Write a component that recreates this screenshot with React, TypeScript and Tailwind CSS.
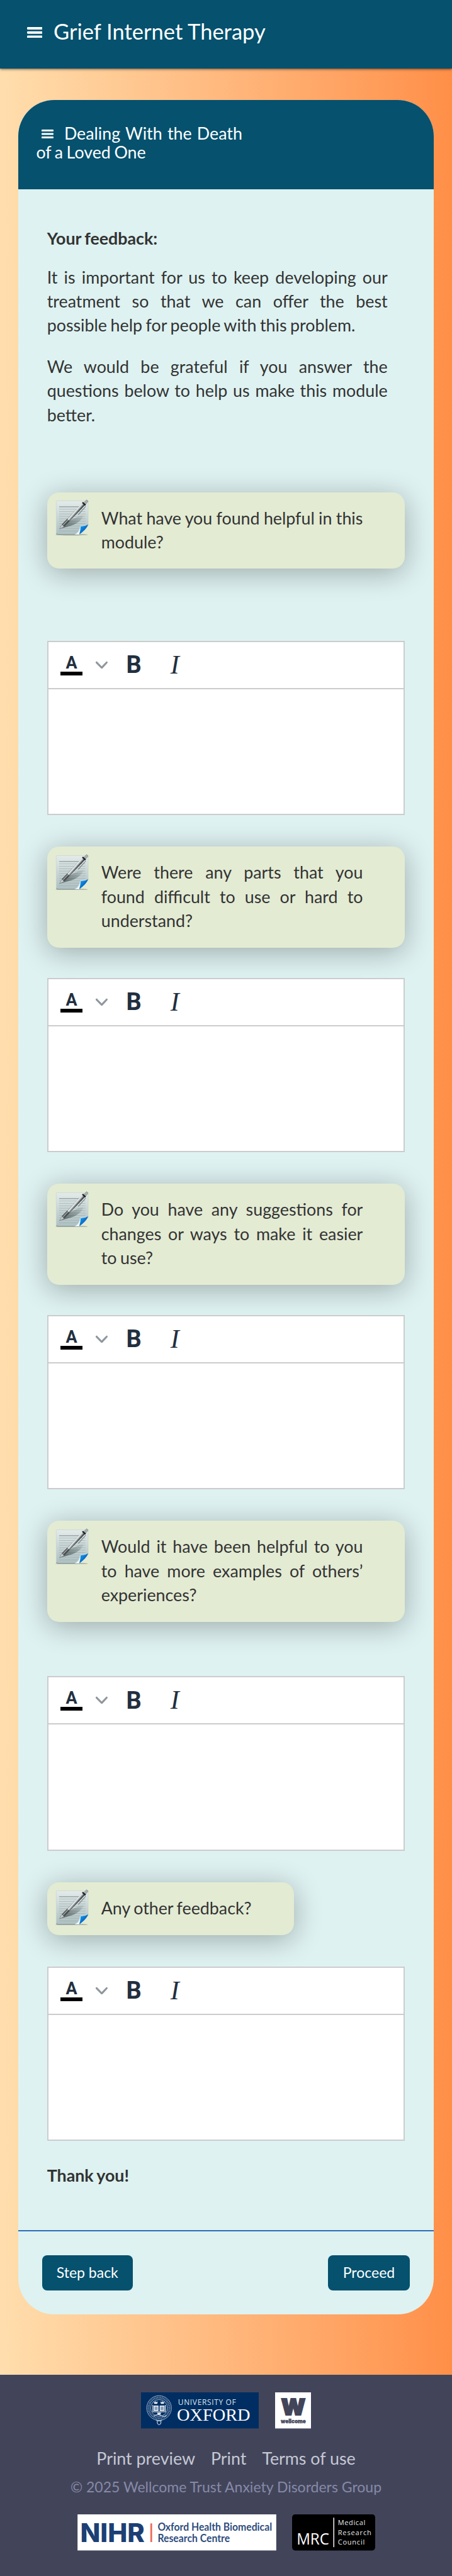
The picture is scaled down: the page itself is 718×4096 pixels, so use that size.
const questions = [
  {
    text: 'What have you found helpful in this module?',
    card: 'mt-[104px] h-[121px]',
    editor: 'mt-[115px]',
  },
  {
    text: 'Were there any parts that you found difficult to use or hard to understand?',
    card: 'mt-[49.8px] h-[160.8px]',
    editor: 'mt-[47.8px]',
  },
  {
    text: 'Do you have any suggestions for changes or ways to make it easier to\u00a0use?',
    card: 'mt-[49.8px] h-[160.8px]',
    editor: 'mt-[47.8px]',
  },
  {
    text: 'Would it have been helpful to you to have more examples of others’ experiences?',
    card: 'mt-[49.8px] h-[160.8px]',
    editor: 'mt-[86.1px]',
  },
  {
    text: 'Any other feedback?',
    card: 'mt-[49.8px] h-[84.2px] w-[392.5px]',
    editor: 'mt-[50px]',
  },
];

const links = ['Print preview', 'Print', 'Terms of use'];

function Burger({ className }: { className: string }) {
  return (
    <svg viewBox="0 0 24 18" preserveAspectRatio="none" fill="currentColor" className={className}>
      <rect width="24" height="4" rx="1.2" />
      <rect y="7" width="24" height="4" rx="1.2" />
      <rect y="14" width="24" height="4" rx="1.2" />
    </svg>
  );
}

function NotepadIcon() {
  return (
    <svg viewBox="0 0 60 60" className="h-[57.4px] w-[57.4px] shrink-0">
      <defs>
        <linearGradient id="paper" x1="0" y1="0" x2="0" y2="1">
          <stop offset="0" stopColor="#e3ebea" />
          <stop offset="1" stopColor="#adc0c2" />
        </linearGradient>
        <linearGradient id="fold" x1="0" y1="0" x2="1" y2="1">
          <stop offset="0" stopColor="#12b4f5" />
          <stop offset="0.6" stopColor="#0a62c4" />
        </linearGradient>
        <linearGradient id="barrel" gradientUnits="userSpaceOnUse" x1="29.5" y1="23" x2="34" y2="27">
          <stop offset="0" stopColor="#5d6465" />
          <stop offset="0.35" stopColor="#f4f7f7" />
          <stop offset="0.65" stopColor="#a9b0b0" />
          <stop offset="1" stopColor="#3f4546" />
        </linearGradient>
        <linearGradient id="penShadow" x1="0" y1="1" x2="1" y2="0">
          <stop offset="0" stopColor="#3c4648" stopOpacity="0.8" />
          <stop offset="1" stopColor="#3c4648" stopOpacity="0.05" />
        </linearGradient>
      </defs>
      <ellipse cx="29" cy="58.8" rx="27" ry="1.3" fill="#6c7568" opacity="0.45" />
      <path d="M4.5 2.5h51a1 1 0 0 1 1 1V43L42 58.5H5.5a2 2 0 0 1-2-2v-53a1 1 0 0 1 1-1z" fill="url(#paper)" stroke="#c3cecd" strokeWidth="0.6" />
      <path d="M4 56.5q0 2 2 2h36" fill="none" stroke="#6f7b7b" strokeWidth="0.8" />
      <path d="M8.3 12.4H46" stroke="#6e7879" strokeWidth="0.9" />
      <path
        d="M8.3 16.3H52M8.3 20.3H52M8.3 24.3H52M8.3 28.3H52M8.3 32.3H52M8.3 36.3H52M8.3 40.3H52M8.3 44.3H44M8.3 48.3H42M8.3 52.6H40"
        stroke="#9fabab"
        strokeWidth="0.7"
      />
      <path d="M9.5 49L24 36 44 27Q51 25 47 31 40 40 28 44z" fill="url(#penShadow)" />
      <path d="M34 58.5Q41.5 56 43.5 44.5l13-2L42 58.5z" fill="#eef4f5" />
      <path d="M44 45q7 0 12.7-3.2-3 8-15 16.7Q44 51 44 45z" fill="url(#fold)" />
      <path d="M12.8 41.8L47.5 5.2l4.3 4L16.5 45.6z" fill="url(#barrel)" />
      <path d="M12.8 41.8l9-9.5 3.7 3.8-9 9.5z" fill="#2c3132" opacity="0.7" />
      <path d="M15 42.5l8.5-8.9" stroke="#d9dede" strokeWidth="0.9" />
      <path d="M9 49.3l3.8-7.5 3.7 3.8z" fill="#c9cfcf" stroke="#5b6162" strokeWidth="0.5" />
      <path d="M52.5 11.5L40 25.5" stroke="#747b7c" strokeWidth="1.1" />
      <path d="M48 4.2l5 4.5-1.6 2-5.2-4.7z" fill="#1e2223" />
      <path d="M50 4.6L54 .8l2.6 2.3-3.6 4.4z" fill="#aab1b1" stroke="#6a7071" strokeWidth="0.6" />
    </svg>
  );
}

function Editor({ className }: { className: string }) {
  return (
    <div className={`relative h-[277.6px] w-[568.7px] border-2 border-[#ccc] bg-white text-[#222f3e] ${className}`}>
      <div className="flex h-[75px] items-start border-b-2 border-[#ccc] pt-[13px] pl-[14px]">
        <div className="flex h-[46px] w-[46px] flex-col items-center justify-end pb-[6px]">
          <span className="font-['Roboto',sans-serif] text-[27px] leading-[24px] font-bold">A</span>
          <span className="mt-[2px] h-[6px] w-[34.5px] bg-black" />
        </div>
        <svg viewBox="0 0 10 10" className="mt-[14px] ml-[15px] h-[19px] w-[19px] fill-[#222f3e] opacity-50">
          <path d="M8.7 2.2c.3-.3.8-.3 1 0 .4.4.4.9 0 1.2L5.7 7.8c-.3.3-.9.3-1.2 0L.2 3.4a.8.8 0 0 1 0-1.2c.3-.3.8-.3 1.1 0L5 6l3.7-3.8z" />
        </svg>
        <span className="ml-[19px] flex h-[46px] w-[46px] items-center justify-center pt-px font-['Roboto',sans-serif] text-[38px] leading-none font-bold">
          B
        </span>
        <span className="ml-[19px] flex h-[46px] w-[46px] items-center justify-center font-['Liberation_Serif',serif] text-[42px] leading-none italic">
          I
        </span>
      </div>
    </div>
  );
}

function OxfordLogo() {
  return (
    <svg viewBox="0 0 195.5 60" className="h-[57.4px] w-[187px]">
      <rect width="195.5" height="60" fill="#002e62" />
      <g fill="none" stroke="#b9c6d8">
        <circle cx="30" cy="26" r="20.5" strokeWidth="0.9" />
        <circle cx="30" cy="26" r="17.2" strokeWidth="3.6" strokeDasharray="1.2 1.3" opacity="0.7" />
        <circle cx="30" cy="26" r="14" strokeWidth="0.9" />
        <path d="M21 40q5-5 12-1.5T42 38M25 46q5 3 10 0M27 47v4q3 6 6 0v-4" strokeWidth="1.3" />
      </g>
      <g fill="#e8edf3">
        <path d="M21 22h8v9h-8zM31 22h8v9h-8z" />
        <path d="M22 19l-.8-4 2.2 1.6L24.5 14l1.1 2.6 2.2-1.6L27 19zM33 19l-.8-4 2.2 1.6 1.1-2.6 1.1 2.6 2.2-1.6L38 19zM27.5 37l-.8-4 2.2 1.6L30 32l1.1 2.6 2.2-1.6-.8 4z" />
        <path d="M19 21h1.2v12H19zM39.8 21H41v12h-1.2zM19 32h22v1H19z" />
      </g>
      <path d="M22.5 24.5h5M22.5 26.5h5M22.5 28.5h5M32.5 24.5h5M32.5 26.5h5M32.5 28.5h5" stroke="#002e62" strokeWidth="0.8" />
      <text x="61.5" y="20.5" textLength="96" fill="#dfe6ee" fontFamily="Open Sans, sans-serif" fontSize="12.5">
        UNIVERSITY OF
      </text>
      <text x="59.5" y="47" textLength="122" lengthAdjust="spacingAndGlyphs" fill="#fff" fontFamily="Liberation Serif, serif" fontSize="29">
        OXFORD
      </text>
    </svg>
  );
}

function WellcomeLogo() {
  return (
    <svg viewBox="0 0 60 60" className="h-[57.4px] w-[57.4px]">
      <rect width="60" height="60" fill="#fff" />
      <g fill="#42455a" stroke="#42455a" fontFamily="Inter, sans-serif" fontWeight="900">
        <text x="10" y="38" textLength="40.5" lengthAdjust="spacingAndGlyphs" fontSize="37" strokeWidth="2">
          W
        </text>
        <text x="9.5" y="51.5" textLength="41.5" lengthAdjust="spacingAndGlyphs" fontSize="9" strokeWidth="0.3">
          wellcome
        </text>
      </g>
    </svg>
  );
}

function NihrLogo() {
  return (
    <svg viewBox="0 0 330 60" className="h-[57.4px] w-[316px] overflow-visible">
      <rect width="330" height="60" fill="#fff" />
      <rect x="121" y="15" width="2.8" height="31" fill="#f0624f" />
      <g fill="#1c3f74">
        <text x="4.5" y="46" textLength="107" lengthAdjust="spacingAndGlyphs" fontFamily="Inter, sans-serif" fontSize="42.5" fontWeight="800">
          NIHR
        </text>
        <g fontFamily="Lato, sans-serif" fontSize="17.8" fontWeight="700" opacity="0.93">
          <text x="133" y="27.7" textLength="190" lengthAdjust="spacingAndGlyphs">
            Oxford Health Biomedical
          </text>
          <text x="133" y="46" textLength="120" lengthAdjust="spacingAndGlyphs">
            Research Centre
          </text>
        </g>
      </g>
    </svg>
  );
}

function MrcLogo() {
  return (
    <svg viewBox="0 0 138 60" className="h-[57.4px] w-[132px]">
      <rect width="138" height="60" rx="5" fill="#000" />
      <rect x="68.5" y="5.5" width="1.5" height="49" fill="#fff" />
      <g fill="#fff">
        <text x="7.5" y="50.7" textLength="54" lengthAdjust="spacingAndGlyphs" fontFamily="Open Sans, sans-serif" fontSize="26">
          MRC
        </text>
        <g fontFamily="Open Sans, sans-serif" fontSize="11.5" opacity="0.92">
          <text x="76" y="18" textLength="45.5">Medical</text>
          <text x="76" y="34" textLength="55.5">Research</text>
          <text x="76" y="49.8" textLength="44.5">Council</text>
        </g>
      </g>
    </svg>
  );
}

export default function App() {
  return (
    <div className="flex h-[4096px] w-[718px] flex-col overflow-hidden bg-linear-to-r from-[#ffdead] to-[#ff8f47] font-['Lato',sans-serif] text-[#333]">
      <header className="relative flex h-[109px] shrink-0 items-start bg-[#05516e] pt-[29px] pl-[42.5px] text-white shadow-[0_1px_4px_rgba(0,0,0,0.6)]">
        <Burger className="mt-[13.5px] h-[17.5px] w-[24.5px]" />
        <h1 className="ml-[18px] text-[34.5px] leading-[41px]">Grief Internet Therapy</h1>
      </header>

      <main className="mx-[28.7px] mt-[50px] h-[3521px] shrink-0 overflow-hidden rounded-[57.4px] bg-[#def2f1]">
        <div className="h-[141.7px] bg-[#05516e] pt-[38px] pl-[28.7px] text-white">
          <h2 className="w-[327.5px] text-justify text-[26.8px] leading-[30.3px] [word-spacing:-1.3px]">
            <Burger className="mr-[16.5px] mb-[5px] ml-[9px] inline-block h-[14px] w-[19px]" />
            Dealing With the Death of a Loved One
          </h2>
        </div>

        <div className="pt-[59.5px] pl-[46px] text-[26.8px] leading-[38.3px] [word-spacing:-1.3px]">
          <p className="font-bold">Your feedback:</p>
          <p className="mt-[23.3px] w-[541px] text-justify">
            It is important for us to keep developing our treatment so that we can offer the best possible help for people with this problem.
          </p>
          <p className="mt-[27.3px] w-[541px] text-justify">
            We would be grateful if you answer the questions below to help us make this module better.
          </p>

          {questions.map((question) => (
            <section key={question.text}>
              <div
                className={`flex max-w-[568.7px] rounded-[19px] bg-[#e3ebd3] pt-[11.5px] pr-[67px] pl-[11.5px] shadow-[0_7px_44px_rgba(0,0,0,0.3)] ${question.card}`}
              >
                <NotepadIcon />
                <p className="mt-[10.5px] ml-[17.2px] flex-1 text-justify">{question.text}</p>
              </div>
              <Editor className={question.editor} />
            </section>
          ))}

          <p className="mt-[35.5px] font-bold">Thank you!</p>
        </div>

        <div className="mt-[68px] flex justify-between border-t-2 border-[#2b6cb8] px-[38.3px] pt-[38.3px] text-[23px] text-white">
          <button className="h-[55.4px] w-[143.6px] rounded-lg bg-[#05516e] pb-px">Step back</button>
          <button className="h-[55.4px] w-[130.2px] rounded-lg bg-[#05516e] pb-px">Proceed</button>
        </div>
      </main>

      <footer className="mt-[95.7px] flex flex-1 flex-col items-center bg-[#42455a] pt-[28.7px]">
        <div className="flex gap-[25.5px]">
          <OxfordLogo />
          <WellcomeLogo />
        </div>
        <nav className="mt-[28px] flex gap-[25px] text-[26.8px] leading-[38px] text-[#c6c8d4]">
          {links.map((link) => (
            <a key={link} href="#">
              {link}
            </a>
          ))}
        </nav>
        <p className="mt-[10.5px] text-[23px] leading-[32px] text-[#8789a8]">© 2025 Wellcome Trust Anxiety Disorders Group</p>
        <div className="mt-[28px] flex gap-[25px]">
          <NihrLogo />
          <MrcLogo />
        </div>
      </footer>
    </div>
  );
}
